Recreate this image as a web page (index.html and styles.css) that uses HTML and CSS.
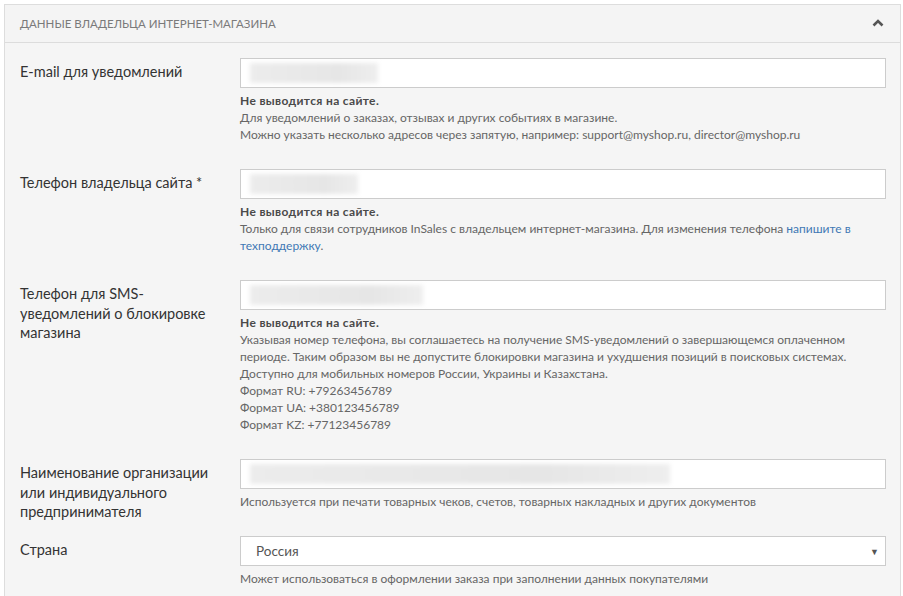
FILE: index.html
```html
<!DOCTYPE html>
<html lang="ru">
<head>
  <meta charset="UTF-8" />
  <title>Настройки магазина</title>
  <link rel="stylesheet" href="styles.css">
</head>
<body>

<div class="panel">
  <div class="panel-heading">
    <span class="panel-title">Данные владельца интернет-магазина</span>
    <svg class="collapse-icon" width="12" height="8" viewBox="0 0 12 8">
      <path d="M1.5 6.5 L6 2 L10.5 6.5" fill="none" stroke="#555" stroke-width="2.6" />
    </svg>
  </div>

  <div class="panel-body">
    <div class="form-row">
      <label class="form-label">E-mail для уведомлений</label>
      <div class="form-field">
        <div class="form-input"><span class="masked" style="width: 128px"></span></div>
        <div class="help">
          <b>Не выводится на сайте.</b><br>
          Для уведомлений о заказах, отзывах и других событиях в магазине.<br>
          Можно указать несколько адресов через запятую, например: support@myshop.ru, director@myshop.ru
        </div>
      </div>
    </div>

    <div class="form-row">
      <label class="form-label">Телефон владельца сайта *</label>
      <div class="form-field">
        <div class="form-input"><span class="masked" style="width: 108px"></span></div>
        <div class="help">
          <b>Не выводится на сайте.</b><br>
          Только для связи сотрудников InSales с владельцем интернет-магазина. Для изменения телефона <a href="#">напишите в техподдержку</a>.
        </div>
      </div>
    </div>

    <div class="form-row">
      <label class="form-label">Телефон для SMS-уведомлений о блокировке магазина</label>
      <div class="form-field">
        <div class="form-input"><span class="masked" style="width: 173px"></span></div>
        <div class="help">
          <b>Не выводится на сайте.</b><br>
          Указывая номер телефона, вы соглашаетесь на получение SMS-уведомлений о завершающемся оплаченном периоде. Таким образом вы не допустите блокировки магазина и ухудшения позиций в поисковых системах.<br>
          Доступно для мобильных номеров России, Украины и Казахстана.<br>
          Формат RU: +79263456789<br>
          Формат UA: +380123456789<br>
          Формат KZ: +77123456789
        </div>
      </div>
    </div>

    <div class="form-row">
      <label class="form-label">Наименование организации или индивидуального предпринимателя</label>
      <div class="form-field">
        <div class="form-input"><span class="masked" style="width: 420px"></span></div>
        <div class="help">Используется при печати товарных чеков, счетов, товарных накладных и других документов</div>
      </div>
    </div>

    <div class="form-row">
      <label class="form-label">Страна</label>
      <div class="form-field">
        <div class="form-input form-select">
          <span>Россия</span>
          <span class="select-arrow">&#9660;</span>
        </div>
        <div class="help">Может использоваться в оформлении заказа при заполнении данных покупателями</div>
      </div>
    </div>
  </div>
</div>

</body>
</html>
```

FILE: styles.css
```css
body {
  margin: 0;
  padding: 4px 2px 0 4px;
  background-color: #ffffff;
  font-family: Lato, 'Open Sans', sans-serif;
  color: #333;
}

.panel {
  border: 1px solid #dddddd;
  border-bottom: none;
  background-color: #f5f5f5;
}

.panel-heading {
  display: flex;
  align-items: center;
  justify-content: space-between;
  height: 37px;
  padding: 0 16px 0 15px;
  background-color: #f4f4f4;
  border-bottom: 1px solid #dcdcdc;
}

.panel-title {
  font-size: 11.5px;
  text-transform: uppercase;
  color: #7a7a7a;
}

.collapse-icon {
  margin-top: -2px;
}

.panel-body {
  padding: 15px 14px 0 15px;
}

.form-row {
  display: flex;
  margin-bottom: 14px;
}

.form-label {
  width: 200px;
  flex-shrink: 0;
  padding: 4px 20px 0 0;
  font-size: 14.5px;
  line-height: 19.5px;
  color: #333;
}

.form-field {
  flex: 1;
}

.form-input {
  display: flex;
  align-items: center;
  box-sizing: border-box;
  height: 30px;
  padding: 0 9px;
  background-color: #ffffff;
  border: 1px solid #cccccc;
}

/* hidden values are shown as soft grey smudges */
.masked {
  display: block;
  height: 20px;
  background: linear-gradient(90deg, #ececec, #e6e6e6 70%, #eeeeee);
  filter: blur(2px);
}

.form-select {
  justify-content: space-between;
  padding: 0 6px 0 15px;
  font-size: 13.5px;
  color: #555;
}

.select-arrow {
  font-size: 9px;
  color: #555;
}

.help {
  margin: 4px 0 12px;
  font-size: 12px;
  line-height: 17px;
  color: #666;
}

.help b {
  color: #4a4a4a;
  letter-spacing: 0.35px;
}

.help a {
  color: #3f78b4;
  text-decoration: none;
}
```
